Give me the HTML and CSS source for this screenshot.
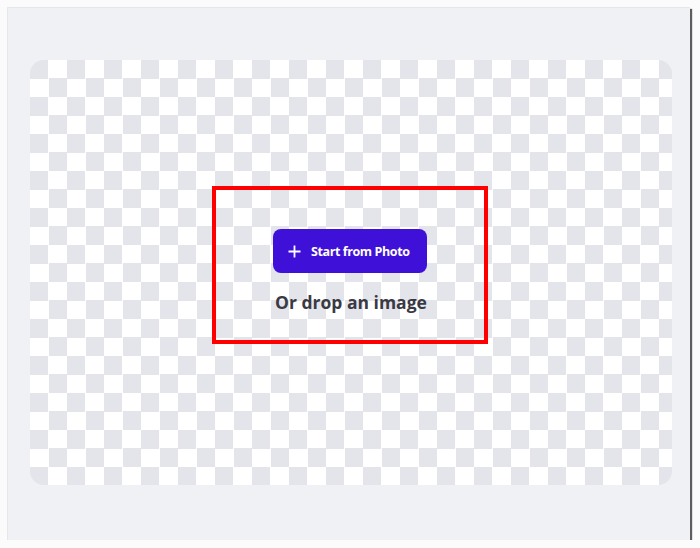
FILE: index.html
```html
<!DOCTYPE html>
<html lang="en">

<head>
    <meta charset="UTF-8">
    <meta name="viewport" content="width=device-width, initial-scale=1.0">
    <title>Start from Photo</title>
    <link rel="stylesheet" href="styles.css">
</head>

<body>

    <div class="window">
        <div class="canvas">
            <div class="drop">
                <button class="start-btn" type="button">
                    <svg class="plus" width="13" height="13" viewBox="0 0 13 13">
                        <path d="M6.5 0.5v12M0.5 6.5h12" stroke="#fff" stroke-width="1.8" fill="none" />
                    </svg>
                    <span>Start from Photo</span>
                </button>
                <p class="drop-text">Or drop an image</p>
            </div>
        </div>
    </div>

</body>

</html>
```

FILE: styles.css
```css
body {
    margin: 0;
    background-color: #fbfbfb;
    font-family: "Open Sans", "Liberation Sans", sans-serif;
}

.window {
    margin: 7px 0 0 7px;
    width: 683px;
    height: 533px;
    box-sizing: border-box;
    padding: 52px 0 0 22px;
    background-color: #f0f1f5;
    border: 1px solid #e6e7eb;
    border-width: 1px 0 0 1px;
    box-shadow: 2px 2px 1px rgba(40, 40, 40, 0.75);
}

.canvas {
    width: 642px;
    height: 425px;
    box-sizing: border-box;
    padding-top: 126px;
    display: flex;
    flex-direction: column;
    align-items: center;
    border-radius: 14px;
    background-color: #fff;
    background-image: conic-gradient(#fff 25%, #e4e5ea 0 50%, #fff 0 75%, #e4e5ea 0);
    background-size: 37px 37px;
}

.drop {
    width: 276px;
    height: 158px;
    box-sizing: border-box;
    margin-right: 2px;
    border: 4px solid #ff0000;
    padding-top: 39px;
    display: flex;
    flex-direction: column;
    align-items: center;
}

.start-btn {
    width: 154px;
    height: 44px;
    display: flex;
    align-items: center;
    gap: 10px;
    padding: 0 0 0 15px;
    border: none;
    border-radius: 8px;
    background-color: #3f11d8;
    color: white;
    font-family: "Open Sans", "Liberation Sans", sans-serif;
    font-size: 12.5px;
    font-weight: 700;
    letter-spacing: -0.4px;
}

.plus {
    flex-shrink: 0;
}

.drop-text {
    margin: 17px 0 0 2px;
    font-size: 17.5px;
    font-weight: 700;
    color: #3a3a44;
    letter-spacing: 0;
}
```
